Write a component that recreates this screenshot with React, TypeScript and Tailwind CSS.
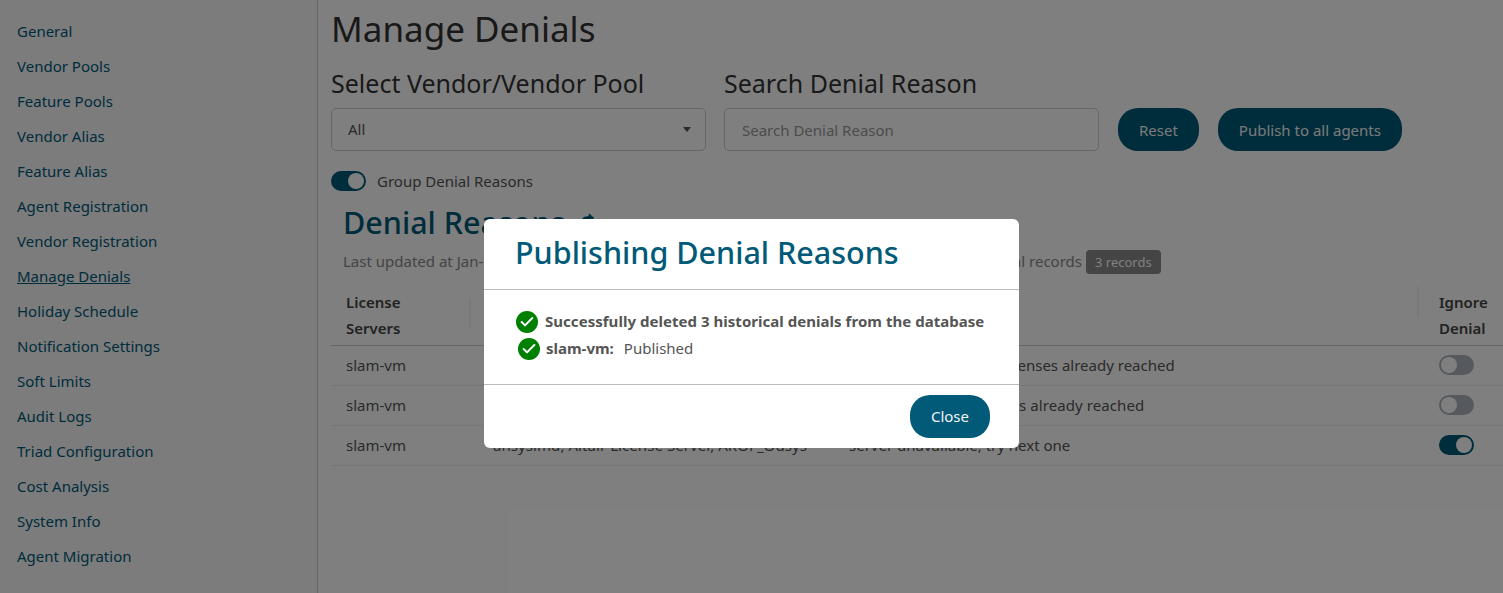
import { Check } from 'lucide-react';
import { FaShare } from 'react-icons/fa';

const navItems = [
  'General',
  'Vendor Pools',
  'Feature Pools',
  'Vendor Alias',
  'Feature Alias',
  'Agent Registration',
  'Vendor Registration',
  'Manage Denials',
  'Holiday Schedule',
  'Notification Settings',
  'Soft Limits',
  'Audit Logs',
  'Triad Configuration',
  'Cost Analysis',
  'System Info',
  'Agent Migration',
];

const rows = [
  { vendor: 'ansyslmd, Altair License Server, AROF_Ousys', reason: 'Maximum number of licenses already reached', on: false },
  { vendor: 'ansyslmd, Altair License Server, AROF_Ousys', reason: 'Maximum count of users already reached', on: false },
  { vendor: 'ansyslmd, Altair License Server, AROF_Ousys', reason: 'server unavailable, try next one', on: true },
];

function Toggle({ on }: { on: boolean }) {
  return (
    <span
      className={`flex h-5 w-[35px] items-center rounded-full border-2 ${
        on ? 'justify-end border-[#005a78] bg-[#005a78]' : 'justify-start border-[#adb5bd] bg-[#adb5bd]'
      }`}
    >
      <span className="h-4 w-4 rounded-full bg-white" />
    </span>
  );
}

function GreenCheck() {
  return (
    <span className="relative top-[1px] flex h-[22px] w-[22px] shrink-0 items-center justify-center rounded-full bg-[#008000]">
      <Check className="h-4 w-4 text-white" strokeWidth={3} />
    </span>
  );
}

export default function App() {
  return (
    <div className="relative flex h-[593px] overflow-hidden bg-white font-['Noto_Sans',sans-serif] text-[15px] text-[#555]">
      <nav className="w-[318px] shrink-0 border-r border-[#ccc] bg-[#f8f8f8] pl-[17px] pt-[14px]">
        {navItems.map((item) => (
          <div key={item} className="flex h-[35px] items-center">
            <span className={`text-[#005a78] ${item === 'Manage Denials' ? 'underline' : ''}`}>{item}</span>
          </div>
        ))}
      </nav>

      <main className="min-w-0 flex-1 pl-[13px]">
        <h1 className="mt-[6px] text-[35px] leading-[46px] text-[#333]">Manage Denials</h1>

        <div className="mt-[15px] flex items-end">
          <div className="w-[375px]">
            <div className="text-[25px] leading-[32px] text-[#333]">Select Vendor/Vendor Pool</div>
            <div className="mt-[9px] flex h-[43px] items-center justify-between rounded-[5px] border border-[#ccc] pl-[16px] pr-[14px] text-[#555]">
              <span>All</span>
              <span className="h-0 w-0 border-x-[4px] border-t-[5px] border-x-transparent border-t-[#555]" />
            </div>
          </div>
          <div className="ml-[18px] w-[375px]">
            <div className="text-[25px] leading-[32px] text-[#333]">Search Denial Reason</div>
            <div className="mt-[9px] flex h-[43px] items-center rounded-[5px] border border-[#ccc] pl-[17px] pt-[1px] text-[#999]">
              Search Denial Reason
            </div>
          </div>
          <button className="ml-[19px] h-[43px] rounded-[20px] bg-[#005a78] px-[21px] pt-[1px] text-[#f4f4f4]">Reset</button>
          <button className="ml-[19px] h-[43px] rounded-[20px] bg-[#005a78] px-[21px] pt-[1px] text-[#f4f4f4]">
            Publish to all agents
          </button>
        </div>

        <div className="mt-[19px] flex items-center gap-[11px] text-[#555]">
          <Toggle on />
          <span>Group Denial Reasons</span>
        </div>

        <div className="ml-[12px] mt-[9px] flex items-start">
          <h2 className="text-[30.5px] font-medium leading-[41px] text-[#005a78]">Denial Reasons</h2>
          <FaShare className="ml-[17px] mt-[11px] h-[12px] w-[12px] text-[#005a78]" />
        </div>

        <div className="ml-[12px] mt-[7px] flex h-6 items-center text-[#888]">
          <div className="flex w-[739px] justify-between">
            <span>Last updated at Jan-12-2024 10:15:30</span>
            <span>Total records</span>
          </div>
          <span className="ml-[4px] rounded-[4px] bg-[#8a8a8a] px-[9px] text-[13px] leading-6 text-white">3 records</span>
        </div>

        <table className="mt-[15px] w-full table-fixed border-collapse text-left">
          <thead>
            <tr className="border-b border-[#ccc] text-[#444]">
              <th className="relative w-[162px] pb-[4px] pl-[15px] align-top font-semibold leading-[26px]">
                License
                <br />
                Servers
                <span className="absolute left-[138px] top-[10px] h-[30px] w-[2px] bg-[#f3f3f3]" />
              </th>
              <th className="w-[356px] font-semibold">Vendor</th>
              <th className="font-semibold">Denial Reason</th>
              <th className="relative w-[85px] pb-[4px] pl-[21px] font-semibold leading-[26px]">
                Ignore
                <br />
                Denial
                <span className="absolute left-[-1px] top-[-3px] h-[30px] w-[2px] bg-[#f3f3f3]" />
              </th>
            </tr>
          </thead>
          <tbody>
            {rows.map((row, i) => (
              <tr key={i} className="h-10 border-b border-[#eee]">
                <td className="pl-[15px]">slam-vm</td>
                <td className="truncate tracking-[0.07px]">{row.vendor}</td>
                <td className={i === 1 ? 'tracking-[0.08px]' : ''}>{row.reason}</td>
                <td className="pl-[21px]">
                  <Toggle on={row.on} />
                </td>
              </tr>
            ))}
          </tbody>
        </table>
      </main>

      {/* Backdrop + modal */}
      <div className="absolute inset-0 bg-black/50" />
      <div className="absolute left-[484px] top-[219px] w-[535px] rounded-[6px] bg-white">
        <div className="flex h-[71px] items-center border-b border-[#bbb] pb-[4px] pl-[31px]">
          <h3 className="text-[30.5px] font-medium leading-[41px] text-[#005a78]">Publishing Denial Reasons</h3>
        </div>
        <div className="h-[95px] border-b border-[#bbb] pl-[32px] pt-[20px]">
          <div className="flex h-[22px] items-center gap-[7px] font-bold tracking-[0.035px] text-[#555]">
            <GreenCheck />
            <span>Successfully deleted 3 historical denials from the database</span>
          </div>
          <div className="ml-[2px] mt-[5px] flex h-[22px] items-center gap-[6px] text-[#555]">
            <GreenCheck />
            <span className="font-bold">slam-vm:</span>
            <span className="ml-[4px]">Published</span>
          </div>
        </div>
        <div className="flex h-[63px] items-center justify-end pr-[29px]">
          <button className="h-[43px] rounded-[20px] bg-[#005a78] px-[21px] text-[#f4f4f4]">Close</button>
        </div>
      </div>
    </div>
  );
}
